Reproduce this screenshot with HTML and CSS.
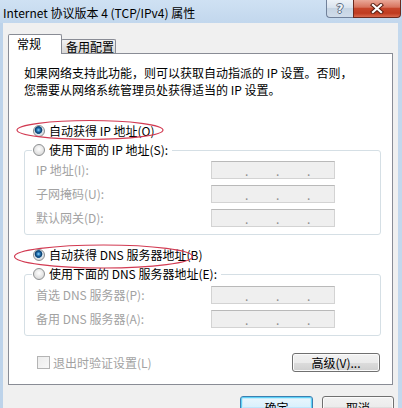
FILE: index.html
```html
<!DOCTYPE html>
<html>
<head>
<meta charset="utf-8">
<link rel="stylesheet" href="styles.css">
</head>
<body>
<div class="window">
  <div class="titlebar">
    <span class="title">Internet 协议版本 4 (TCP/IPv4) 属性</span>
    <div class="caption">
      <div class="cap help">?</div>
      <div class="cap close">
        <svg width="14" height="11" viewBox="0 0 14 11">
          <path d="M3 2 L11 9 M11 2 L3 9" stroke="#5b2014" stroke-width="4.2" stroke-linecap="square" fill="none"/>
          <path d="M3 2 L11 9 M11 2 L3 9" stroke="#ffffff" stroke-width="2.2" stroke-linecap="square" fill="none"/>
        </svg>
      </div>
    </div>
  </div>
  <div class="client">
    <div class="tabs">
      <div class="tab active">常规</div>
      <div class="tab">备用配置</div>
    </div>
    <div class="panel">
      <p class="desc"><span class="line">如果网络支持此功能，则可以获取自动指派的 IP 设置。否则，</span><span class="line">您需要从网络系统管理员处获得适当的 IP 设置。</span></p>
      <div class="radio-row first"><span class="radio on"></span>自动获得 IP 地址(O)</div>
      <div class="group">
        <div class="legend"><span class="radio"></span>使用下面的 IP 地址(S):</div>
        <div class="rows ip-rows">
          <span class="lbl">IP 地址(I):</span>
          <span class="ipbox"><span class="dot">.</span><span class="dot">.</span><span class="dot">.</span></span>
          <span class="lbl">子网掩码(U):</span>
          <span class="ipbox"><span class="dot">.</span><span class="dot">.</span><span class="dot">.</span></span>
          <span class="lbl">默认网关(D):</span>
          <span class="ipbox"><span class="dot">.</span><span class="dot">.</span><span class="dot">.</span></span>
        </div>
      </div>
      <div class="radio-row dns"><span class="radio on"></span>自动获得 DNS 服务器地址(B)</div>
      <div class="group">
        <div class="legend"><span class="radio"></span>使用下面的 DNS 服务器地址(E):</div>
        <div class="rows dns-rows">
          <span class="lbl">首选 DNS 服务器(P):</span>
          <span class="ipbox"><span class="dot">.</span><span class="dot">.</span><span class="dot">.</span></span>
          <span class="lbl">备用 DNS 服务器(A):</span>
          <span class="ipbox"><span class="dot">.</span><span class="dot">.</span><span class="dot">.</span></span>
        </div>
      </div>
      <div class="bottom-row">
        <div class="check"><span class="box"></span>退出时验证设置(L)</div>
        <button class="btn adv">高级(V)...</button>
      </div>
    </div>
    <div class="actions">
      <button class="btn default ok">确定</button>
      <button class="btn cancel">取消</button>
    </div>
  </div>
  <svg class="marks" width="402" height="408" viewBox="0 0 402 408">
    <ellipse cx="90" cy="130" rx="73" ry="9.5" fill="none" stroke="#d23a52" stroke-width="1.2"/>
    <ellipse cx="103.5" cy="256.5" rx="89" ry="11.5" fill="none" stroke="#d23a52" stroke-width="1.2"/>
  </svg>
</div>
</body>
</html>
```
FILE: styles.css
```css
body {
  margin: 0;
  overflow: hidden;
  background: #ffffff;
}

.window {
  position: relative;
  width: 402px;
  height: 408px;
  overflow: hidden;
  display: flex;
  flex-direction: column;
  background: linear-gradient(90deg, #bdd3ea, #c9dcef 50%, #c3d8ed);
  font-family: "Noto Sans CJK SC", sans-serif;
  font-size: 12px;
  line-height: 14px;
  color: #000;
}

.titlebar {
  height: 23px;
  flex: none;
  display: flex;
  justify-content: space-between;
  align-items: flex-start;
  background: linear-gradient(180deg, #cfe1f3 0%, #c2d7ed 100%);
}

.title {
  padding: 5px 0 0 3px;
  line-height: 16px;
  font-size: 12px;
}

.caption {
  display: flex;
  margin-right: 1px;
}

.cap {
  box-sizing: border-box;
  height: 18px;
  display: flex;
  align-items: center;
  justify-content: center;
}

.help {
  width: 27px;
  border: 1px solid #71819a;
  border-top: none;
  border-right: none;
  border-bottom-left-radius: 4px;
  background: linear-gradient(180deg, #edf2f8 0%, #d9e3ee 45%, #c6d4e3 50%, #d0dcea 100%);
  color: #eef3f8;
  font-weight: bold;
  font-size: 12px;
  font-family: "DejaVu Sans", sans-serif;
  text-shadow: 1px 0 #5d6c80, -1px 0 #5d6c80, 0 1px #5d6c80, 0 -1px #5d6c80;
}

.close {
  width: 48px;
  border: 1px solid #6c2a1f;
  border-top: none;
  border-bottom-right-radius: 4px;
  background: linear-gradient(180deg, #eaa898 0%, #d8745e 42%, #c6452a 50%, #bf3b20 78%, #d9694e 100%);
}

.client {
  flex: 1;
  margin: 0 4px 0 3px;
  background: #f0f0f0;
  padding-top: 11px;
}

.tabs {
  display: flex;
  align-items: flex-end;
  padding-left: 5px;
}

.tab {
  box-sizing: border-box;
  border: 1px solid #898c95;
  border-bottom: none;
  border-radius: 2px 2px 0 0;
}

.tab.active {
  position: relative;
  z-index: 2;
  width: 54px;
  height: 20px;
  margin-bottom: -1px;
  padding-left: 8px;
  background: #ffffff;
  line-height: 17px;
}

.tab:not(.active) {
  width: 55px;
  height: 14px;
  margin-left: -1px;
  padding-left: 4px;
  line-height: 13px;
  background: linear-gradient(180deg, #f3f3f3 0%, #e4e4e4 50%, #d6d6d6 100%);
}

.panel {
  position: relative;
  z-index: 1;
  box-sizing: border-box;
  width: 385px;
  height: 332px;
  margin-left: 5px;
  border: 1px solid #898c95;
  background: #ffffff;
  padding: 0 11px 0 15px;
  display: flex;
  flex-direction: column;
}

.desc {
  margin: 10px 0 0;
  display: flex;
  flex-direction: column;
  line-height: 17px;
}

.line {
  display: block;
  height: 17px;
}

.radio-row {
  display: flex;
  align-items: center;
  padding-left: 9px;
  line-height: 14px;
}

.radio-row.first {
  margin-top: 26px;
}

.radio-row.dns {
  margin-top: 13px;
}

.radio {
  flex: none;
  box-sizing: border-box;
  width: 12px;
  height: 12px;
  margin-right: 4px;
  border-radius: 50%;
  border: 1px solid #8d8f91;
  background: radial-gradient(circle at 50% 40%, #ffffff 0, #ececec 40%, #cfcfcf 100%);
}

.radio.on {
  background: radial-gradient(circle at 45% 40%, #9ad6f7 0, #2c82c3 1.5px, #0f416f 3px, #1a5a90 3.6px, #e1e7ec 4.2px, #cbcbcb 100%);
}

.group {
  margin-top: 12px;
  border: 1px solid #d5dfe5;
  border-radius: 3px;
  padding-bottom: 7px;
}

.legend {
  display: flex;
  align-items: center;
  width: fit-content;
  margin: -8px 0 0 7px;
  padding: 0 4px 0 1px;
  background: #ffffff;
  line-height: 14px;
}

.rows {
  display: grid;
  grid-template-columns: 175px 124px;
  grid-auto-rows: 18px;
  row-gap: 6px;
  padding-left: 11px;
}

.ip-rows {
  margin-top: 4px;
}

.dns-rows {
  margin-top: 5px;
}

.lbl {
  line-height: 18px;
  color: #a2a2a2;
}

.ipbox {
  box-sizing: border-box;
  height: 18px;
  border: 1px solid #d3d3d3;
  border-top-color: #b9b9b9;
  background: #efefef;
  display: flex;
  align-items: flex-end;
  padding-left: 33px;
  gap: 29px;
}

.dot {
  width: 2px;
  line-height: 14px;
  color: #8c8c8c;
}

.bottom-row {
  margin-top: 17px;
  height: 19px;
  display: flex;
  align-items: center;
  justify-content: space-between;
  padding: 0 1px 0 13px;
}

.check {
  display: flex;
  align-items: center;
  color: #a2a2a2;
}

.box {
  box-sizing: border-box;
  width: 13px;
  height: 13px;
  margin-right: 3px;
  border: 1px solid #b4b4b4;
  background: linear-gradient(135deg, #ececec, #f8f8f8);
}

.btn {
  box-sizing: border-box;
  padding: 0;
  border: 1px solid #707070;
  border-radius: 3px;
  background: linear-gradient(180deg, #f2f2f2 0%, #ebebeb 50%, #dddddd 50%, #cfcfcf 100%);
  box-shadow: inset 0 0 0 1px #fbfbfb;
  font-family: inherit;
  font-size: 12px;
  color: #000;
  text-align: center;
}

.adv {
  width: 88px;
  height: 19px;
  line-height: 17px;
}

.actions {
  display: flex;
  justify-content: flex-end;
  gap: 9px;
  margin-top: 11px;
  padding-right: 4px;
}

.actions .btn {
  height: 23px;
  line-height: 20px;
}

.ok {
  width: 73px;
}

.cancel {
  width: 72px;
}

.btn.default {
  border-color: #3c7fb1;
  background: linear-gradient(180deg, #eaf6fd 0%, #d9f0fc 50%, #bee6fd 50%, #a7d9f5 100%);
  box-shadow: inset 0 0 0 1px #5fd2f7, inset 0 0 0 2px #c5ecfc;
}

.marks {
  position: absolute;
  left: 0;
  top: 0;
  z-index: 5;
  pointer-events: none;
}
```
